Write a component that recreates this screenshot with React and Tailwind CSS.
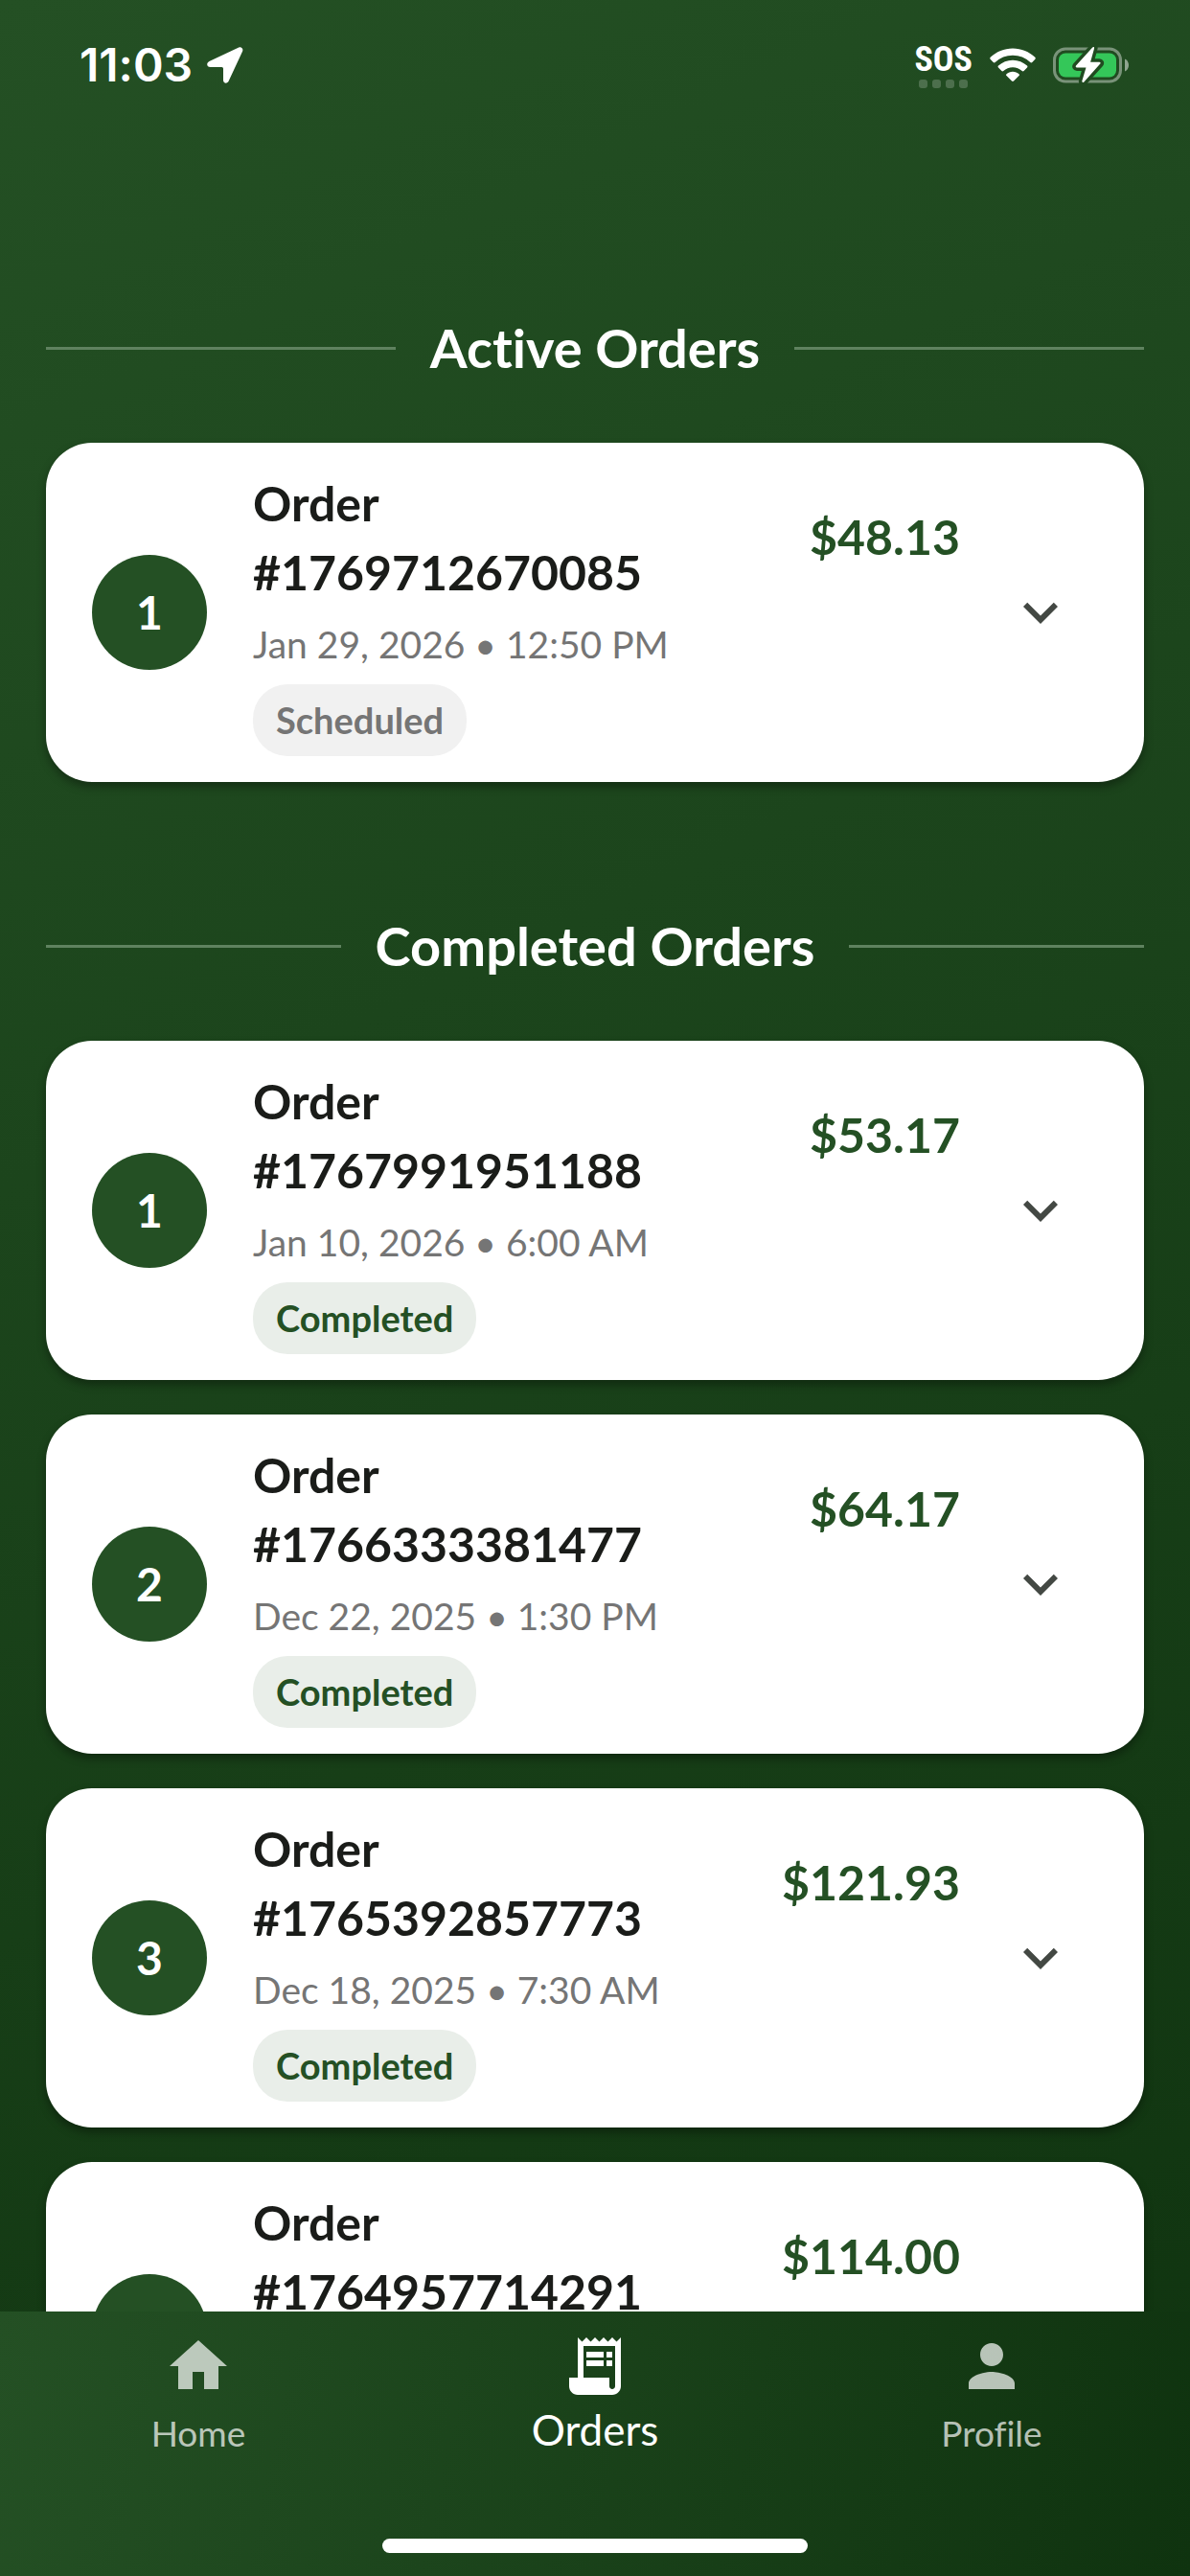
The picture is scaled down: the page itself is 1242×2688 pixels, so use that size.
import { useState } from 'react';
import { MdExpandMore, MdHome, MdPerson, MdReceiptLong } from 'react-icons/md';

const activeOrders = [
  { id: '1769712670085', date: 'Jan 29, 2026 • 12:50 PM', total: '$48.13', status: 'Scheduled' },
];

const completedOrders = [
  { id: '1767991951188', date: 'Jan 10, 2026 • 6:00 AM', total: '$53.17', status: 'Completed' },
  { id: '1766333381477', date: 'Dec 22, 2025 • 1:30 PM', total: '$64.17', status: 'Completed' },
  { id: '1765392857773', date: 'Dec 18, 2025 • 7:30 AM', total: '$121.93', status: 'Completed' },
  { id: '1764957714291', date: 'Dec 13, 2025 • 9:00 AM', total: '$114.00', status: 'Completed' },
];

const tabs = [
  { name: 'Home', icon: MdHome },
  { name: 'Orders', icon: MdReceiptLong },
  { name: 'Profile', icon: MdPerson },
];

function StatusBar() {
  return (
    <header className="flex h-[136px] shrink-0 items-center justify-between pr-[63px] pl-[83px] text-white">
      <div className="flex items-center gap-[15px]">
        <span className="font-['Inter',sans-serif] text-[48px] leading-[56px] font-semibold">
          11:03
        </span>
        <svg className="size-[38px]" viewBox="0 0 38 38" fill="currentColor">
          <path d="M33.2.5 2.4 15.1C-1 16.800-.3 21 3.500 21H15.500Q17 21 17 22.500V34.500C17 38.300 21.300 38.700 22.700 35.600L37 4.800C38.300 2 36-.8 33.200.5z" />
        </svg>
      </div>

      <div className="flex items-center gap-[18px]">
        <div className="flex flex-col items-center gap-[3px]">
          <span className="font-['Roboto_Condensed','Open_Sans_Condensed','Noto_Sans_CJK_JP',sans-serif] text-[36px] leading-[36px] font-bold">
            SOS
          </span>
          <div className="flex gap-[5px]">
            <span className="size-[9px] rounded-[3px] bg-white/20" />
            <span className="size-[9px] rounded-[3px] bg-white/20" />
            <span className="size-[9px] rounded-[3px] bg-white/20" />
            <span className="size-[9px] rounded-[3px] bg-white/20" />
          </div>
        </div>
        <svg className="h-[36px] w-[48px]" viewBox="0 0 48 36" fill="currentColor">
          <path d="M24 .5C33 .5 41.300 4 47.300 9.800c.6.600.6 1.400.1 2L44.300 15c-.6.600-1.400.6-2 0A26.500 26.500 0 0 0 24 7.700 26.500 26.500 0 0 0 5.700 15c-.6.600-1.400.6-2 0L.6 11.800c-.5-.6-.5-1.400.1-2C6.700 4 15 .5 24 .5z" />
          <path d="M24 12.700c5.700 0 11 2.200 15 5.900.6.600.6 1.400 0 2l-3.400 3.400c-.5.500-1.300.5-1.900 0A14.300 14.300 0 0 0 24 20.200c-3.700 0-7.100 1.400-9.700 3.800-.6.500-1.400.5-1.900 0L9 20.600c-.6-.6-.6-1.400 0-2 4-3.700 9.300-5.900 15-5.900z" />
          <path d="M24 24.800c2.500 0 4.800.9 6.500 2.400.6.500.6 1.300 0 1.900l-5.500 5.500c-.6.600-1.400.6-2 0l-5.500-5.500c-.6-.6-.6-1.400 0-1.900 1.700-1.500 4-2.400 6.500-2.400z" />
        </svg>
        <svg className="h-[40px] w-[80px]" viewBox="0 0 80 40">
          <mask id="bolt-gap">
            <rect width="80" height="40" fill="white" />
            <path
              d="M41.200 1.600 24 20.600c-.7.800-.2 1.900.9 1.900h9.600L30.400 36.300c-.4 1.600 1 2.200 2 1.100L49.300 18.600c.7-.8.200-1.900-.9-1.900h-9.300L43 2.700c.5-1.600-.8-2.200-1.800-1.100z"
              fill="black"
              stroke="black"
              strokeWidth="7"
            />
          </mask>
          <g mask="url(#bolt-gap)">
            <rect x="1.500" y="3" width="69" height="34" rx="11.500" fill="none" stroke="white" strokeOpacity=".4" strokeWidth="3" />
            <rect x="6" y="7.500" width="60" height="25" rx="7" fill="#34c759" />
          </g>
          <path d="M75 13.500c2.500 1 4 3.600 4 6.500s-1.500 5.500-4 6.500z" fill="white" fillOpacity=".5" />
          <path
            d="M41.200 1.600 24 20.600c-.7.800-.2 1.900.9 1.900h9.600L30.400 36.300c-.4 1.600 1 2.200 2 1.100L49.300 18.600c.7-.8.200-1.900-.9-1.900h-9.300L43 2.700c.5-1.600-.8-2.200-1.800-1.100z"
            fill="white"
          />
        </svg>
      </div>
    </header>
  );
}

function OrderCard({ order, index }) {
  const [open, setOpen] = useState(false);
  const badgeColor =
    order.status === 'Completed' ? 'bg-[#e9eee9] text-[#245024]' : 'bg-[#f1f1f1] text-[#757575]';

  return (
    <li className="rounded-[48px] bg-white shadow-[0_5px_10px_rgba(0,0,0,0.35)]">
      <button
        type="button"
        className="flex w-full items-center py-[27px] pr-[72px] pl-12 text-left"
        aria-expanded={open}
        onClick={() => setOpen(!open)}
      >
        <span className="mr-12 flex size-[120px] shrink-0 items-center justify-center rounded-full bg-[#245024] text-[48px] font-bold text-white">
          {index}
        </span>
        <span className="flex flex-1 flex-col items-start">
          <span className="text-[50px] leading-[72px] font-bold text-[#1a1c19]">
            Order
            <br />#{order.id}
          </span>
          <span className="mt-[9px] text-[39px] leading-[60px] text-[#757575]">{order.date}</span>
          <span
            className={`mt-3 rounded-[36px] px-6 text-[38px] leading-[75px] font-bold ${badgeColor}`}
          >
            {order.status}
          </span>
        </span>
        <span className="mt-[35px] self-start text-[50px] leading-[72px] font-bold text-[#245024]">
          {order.total}
        </span>
        <MdExpandMore className="ml-12 size-[72px] shrink-0 text-[#434843]" />
      </button>
    </li>
  );
}

function OrderSection({ title, orders }) {
  return (
    <section>
      <div className="mb-[58px] flex items-center gap-9">
        <span className="h-[3px] flex-1 bg-[#5f825f]" />
        <h2 className="text-[56px] leading-[82px] font-bold text-white">{title}</h2>
        <span className="h-[3px] flex-1 bg-[#5f825f]" />
      </div>
      <ul className="flex flex-col gap-9">
        {orders.map((order, i) => (
          <OrderCard key={order.id} order={order} index={i + 1} />
        ))}
      </ul>
    </section>
  );
}

function BottomNav() {
  return (
    <nav className="shrink-0 bg-[linear-gradient(102deg,#245024,#0f330f)] pt-[21px] pb-6">
      <div className="flex">
        {tabs.map(({ name, icon: Icon }) => {
          const active = name === 'Orders';
          return (
            <a
              key={name}
              href={`#${name.toLowerCase()}`}
              aria-current={active ? 'page' : undefined}
              className={`flex flex-1 flex-col items-center ${
                active
                  ? 'text-[44px] leading-[60px] text-white'
                  : 'text-[37px] leading-[68px] text-white/70'
              }`}
            >
              <Icon className="size-[72px]" />
              {name}
            </a>
          );
        })}
      </div>
      <div className="mx-auto mt-[76px] h-[15px] w-[444px] rounded-full bg-white" />
    </nav>
  );
}

export default function App() {
  return (
    <div className="flex h-screen flex-col bg-[linear-gradient(155deg,#245024,#0f330f)] font-['Lato',sans-serif] [font-variant-ligatures:none]">
      <StatusBar />
      <main className="flex min-h-0 flex-1 flex-col gap-[130px] overflow-y-auto px-12 pt-[186px] [scrollbar-width:none]">
        <OrderSection title="Active Orders" orders={activeOrders} />
        <OrderSection title="Completed Orders" orders={completedOrders} />
      </main>
      <BottomNav />
    </div>
  );
}
